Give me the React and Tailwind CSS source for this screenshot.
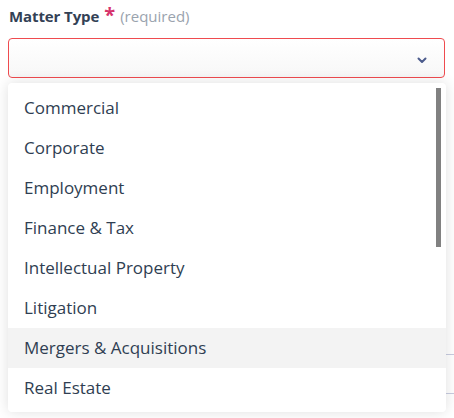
import React from "react";

const options = [
  "Commercial",
  "Corporate",
  "Employment",
  "Finance & Tax",
  "Intellectual Property",
  "Litigation",
  "Mergers & Acquisitions",
  "Real Estate",
];

export default function App() {
  return (
    <div
      className="relative w-[454px] h-[418px] overflow-hidden bg-white"
      style={{ fontFamily: '"Open Sans", "Noto Sans", sans-serif' }}
    >
      {/* underlying form */}
      <div className="flex flex-col pl-[8px] pr-[9px] pt-[5px]">
        <div className="flex items-baseline h-[24px] pl-[1px]">
          <span className="text-[15px] font-bold text-[#334155] tracking-[-0.1px]">Matter Type</span>
          <span className="ml-[5px] text-[20px] leading-none font-bold text-[#d6336c]">*</span>
          <span className="ml-[5px] text-[15px] text-[#9aa3ae]">(required)</span>
        </div>
        <div className="mt-[9px] h-[40px] rounded-[4px] border border-[#ef4b4f] bg-gradient-to-b from-white to-[#f7f7f7] flex items-center justify-end pr-[17px]">
          <svg width="10" height="7" viewBox="0 0 10 7" className="mt-[4px]">
            <path d="M1.5 1.5 L5 5 L8.5 1.5" stroke="#4b5b8c" strokeWidth="2" fill="none" strokeLinecap="round" strokeLinejoin="round" />
          </svg>
        </div>
        <div className="h-[276px]" />
        <div className="h-[40px] w-[460px] border border-[#c8cce0] rounded-[4px]" />
        <div className="mt-[19px] text-[15px] font-bold text-[#334155]">Comments</div>
      </div>

      {/* dropdown overlay */}
      <div className="absolute left-[8px] top-[83px] w-[438px] h-[329px] rounded-[4px] bg-white shadow-[0_0_14px_rgba(0,0,0,0.13)] py-[5px] overflow-hidden">
        <div className="flex flex-col">
          {options.map((o) => (
            <div
              key={o}
              className={
                "h-[40px] flex items-center pl-[16px] text-[17px] text-[#2f3e52] " +
                (o === "Mergers & Acquisitions" ? "bg-[#f3f3f3]" : "")
              }
            >
              {o}
            </div>
          ))}
        </div>
        <div className="absolute right-[5px] top-[5px] w-[5px] h-[159px] bg-[#818181]" />
      </div>
    </div>
  );
}
